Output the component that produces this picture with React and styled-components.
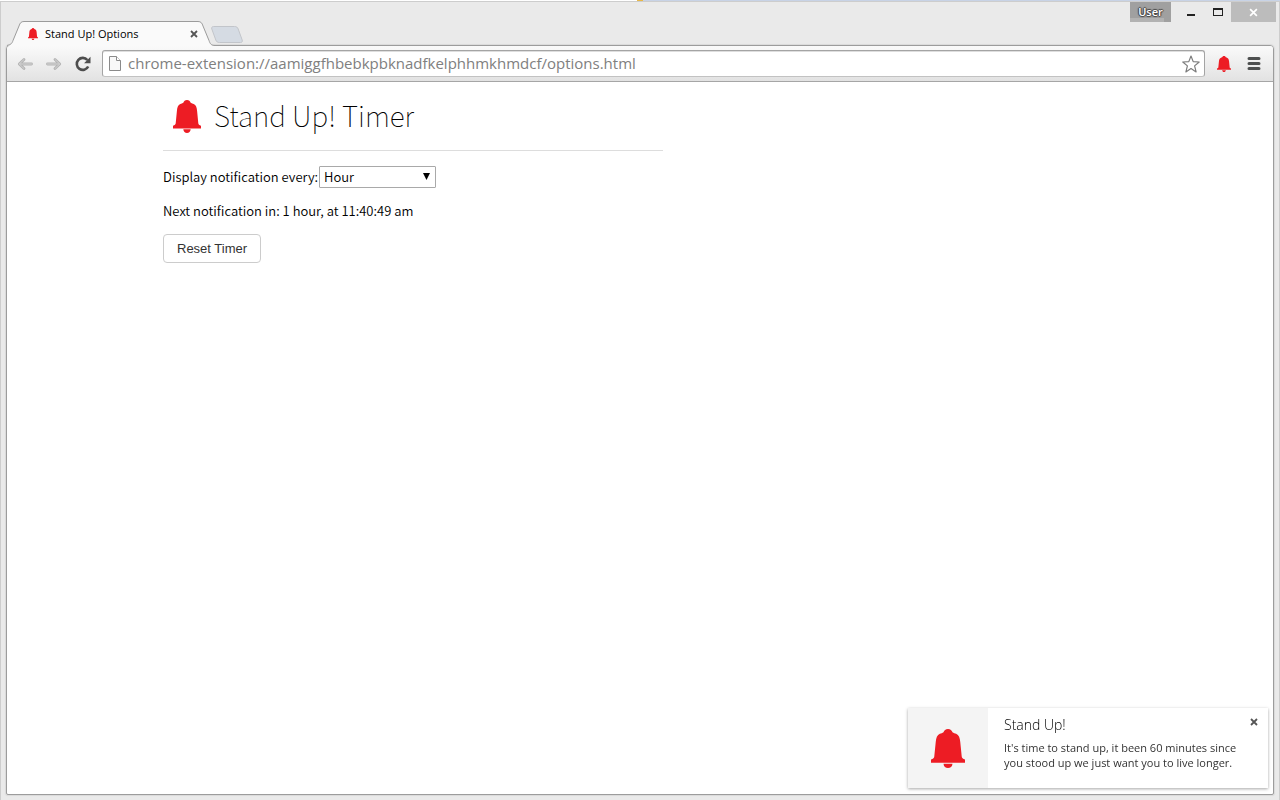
import React, { useState } from 'react';
import styled, { createGlobalStyle } from 'styled-components';

const GlobalStyle = createGlobalStyle`
  *, *::before, *::after { box-sizing: border-box; }
  body { margin: 0; background: #eaeaea; }
  h1, h2, p { margin: 0; font-weight: inherit; }
  button, input, select { font: inherit; color: inherit; margin: 0; padding: 0; border: 0; background: none; border-radius: 0; outline: 0; }
  svg { display: block; flex: none; }
`;

const chromeFont = '"Open Sans", "Noto Sans", sans-serif';
const pageFont = '"Noto Sans CJK SC", "Noto Sans", sans-serif';

const Window = styled.div`
  display: flex;
  flex-direction: column;
  min-height: 100vh;
  background: #eaeaea;
  border-left: 1px solid #cdcdcd;
  border-right: 1px solid #cdcdcd;
  font-family: ${chromeFont};
`;

const DesktopEdge = styled.div`
  display: flex;
  height: 2px;
  margin: 0 -1px;
  border-bottom: 1px solid #cdcdcd;
`;

const EdgeSegment = styled.span`
  flex: ${({ $grow }) => ($grow ? '1 1 0' : '0 0 6px')};
  background: ${({ $color }) => $color};
`;

const TitleBar = styled.header`
  display: flex;
  align-items: flex-end;
  height: 44px;
  margin-bottom: -1px;
  padding: 0 3px 0 6px;
`;

const Tab = styled.div`
  position: relative;
  z-index: 1;
  display: flex;
  align-items: center;
  width: 208px;
  height: 25px;
  margin-right: -4px;
  padding: 0 16px 0 21px;
  font-size: 11px;
  line-height: 16px;
  color: #000;
`;

const TabShape = styled.svg`
  position: absolute;
  inset: 0;
  z-index: -1;
`;

const TabTitle = styled.span`
  flex: 1;
  margin-left: 7px;
  white-space: nowrap;
`;

const IconButton = styled.button`
  display: flex;
  align-items: center;
  justify-content: center;
  flex: none;
  width: ${({ $width }) => $width || 16}px;
  height: ${({ $height }) => $height || 16}px;
  cursor: pointer;
`;

const NewTab = styled(IconButton)`
  margin-bottom: 3px;
`;

const WindowControls = styled.div`
  display: flex;
  align-self: flex-start;
  align-items: center;
  height: 20px;
  margin-left: auto;
`;

const UserButton = styled.button`
  width: 41px;
  height: 20px;
  margin-right: 6px;
  background: linear-gradient(90deg, #a0a0a0, #a0a0a0) top / 100% 16px no-repeat, linear-gradient(90deg, #b2b2b2 34px, #a0a0a0 34px);
  color: #fff;
  font-size: 11px;
  font-weight: 600;
  line-height: 20px;
  text-shadow: 1px 0 1px #444, -1px 0 1px #444, 0 1px 1px #444, 0 -1px 1px #444;
`;

const CloseWindow = styled(IconButton)`
  background: #bcbcbc;
`;

const Browser = styled.div`
  display: flex;
  flex-direction: column;
  flex: 1;
  margin: 0 5px 5px;
  border: 1px solid #9c9c9c;
  border-radius: 4px 4px 2px 2px;
  background: #fff;
  box-shadow: 0 0 1px 1px #dadada;
`;

const Toolbar = styled.nav`
  display: flex;
  align-items: center;
  height: 36px;
  padding: 0 1px 0 7px;
  border-bottom: 1px solid #a6a6a6;
  border-radius: 3px 3px 0 0;
  background: linear-gradient(#fafafa, #e2e2e2);
`;

const AddressBar = styled.div`
  display: flex;
  align-items: center;
  flex: 1;
  height: 27px;
  margin: 0 7px 0 8px;
  padding: 0 4px 0 6px;
  border: 1px solid #a4a4a4;
  border-bottom-color: #c2c2c2;
  border-radius: 3px;
  background: #fff;
  box-shadow: inset 0 1px #dedede;
`;

const AddressInput = styled.input`
  flex: 1;
  min-width: 0;
  height: 25px;
  margin-left: 7px;
  padding-bottom: 2px;
  font-size: 15px;
  line-height: 22px;
  color: #808080;
`;

const Content = styled.main`
  width: 500px;
  max-width: 100%;
  margin-left: 156px;
  font-family: ${pageFont};
  font-size: 13px;
  font-weight: 350;
  line-height: 20px;
  color: #000;
`;

const PageHeader = styled.header`
  display: flex;
  align-items: center;
  gap: 13px;
  height: 69px;
  padding-left: 10px;
  border-bottom: 1px solid #ddd;
`;

const PageTitle = styled.h1`
  padding-bottom: 2px;
  font-size: 28px;
  font-weight: 100;
  line-height: 40px;
`;

const Field = styled.div`
  display: flex;
  align-items: center;
  gap: 1px;
  height: 22px;
  margin-top: 15px;
`;

const SelectBox = styled.div`
  position: relative;
  width: 117px;
`;

const Select = styled.select`
  appearance: none;
  width: 100%;
  height: 22px;
  padding: 0 4px;
  border: 1px solid #a9a9a9;
  border-radius: 1px;
  background: #fff;
  line-height: 20px;
`;

const SelectArrow = styled.svg`
  position: absolute;
  top: 7px;
  right: 6px;
  pointer-events: none;
`;

const Status = styled.p`
  margin-top: 13px;
`;

const ResetButton = styled.button`
  height: 29px;
  margin-top: 13px;
  padding: 0 13px;
  border: 1px solid #ccc;
  border-radius: 4px;
  background: #fff;
  font-family: "Liberation Sans", sans-serif;
  font-size: 13px;
  color: #333;
`;

const Notification = styled.aside`
  position: fixed;
  right: 12px;
  bottom: 12px;
  display: flex;
  width: 360px;
  height: 80px;
  background: #fff;
  box-shadow: 0 1px 3px rgba(0, 0, 0, 0.35);
  font-family: ${chromeFont};
  color: #333;
`;

const NotificationIcon = styled.div`
  display: flex;
  align-items: center;
  justify-content: center;
  flex: none;
  width: 80px;
  background: #f4f4f4;
`;

const NotificationText = styled.div`
  flex: 1;
  padding: 8px 0 0 16px;
  white-space: nowrap;
`;

const NotificationTitle = styled.h2`
  font-size: 14px;
  font-weight: 300;
  line-height: 18px;
  color: #000;
`;

const NotificationMessage = styled.p`
  margin-top: 6px;
  font-size: 11px;
  line-height: 15px;
`;

const NotificationClose = styled(IconButton)`
  position: absolute;
  top: 6px;
  right: 6px;
`;

function Bell({ width, height }) {
  return (
    <svg width={width} height={height} viewBox="0 0 28 33" preserveAspectRatio="none" aria-hidden="true">
      <path
        fill="#ed1c24"
        d="M14 0c2 0 3.200 1.200 3.700 2.800 1 .7 2 .9 3 1.300 2.300 1 3.100 3.600 3.400 6.900l1.200 12.200c.1 1.200.9 1.900 2.700 2.600V28.500H0v-2.700c1.800-.7 2.600-1.400 2.700-2.600L3.900 11c.3-3.300 1.100-5.900 3.400-6.900 1-.4 2-.6 3-1.300C10.800 1.200 12 0 14 0zM10.300 29.300h7.400c-.2 2.400-1.700 3.700-3.700 3.700s-3.500-1.300-3.700-3.700z"
      />
    </svg>
  );
}

function Arrow({ flip }) {
  return (
    <svg width="16" height="14" viewBox="0 0 16 14" aria-hidden="true">
      <g transform={flip ? 'translate(16 0) scale(-1 1)' : undefined} fill="none" strokeLinecap="round" strokeLinejoin="round">
        <path d="M7 2.500L2.300 7L7 11.500M2.500 7H14.500" stroke="#b4b4b4" strokeWidth="2.800" />
        <path d="M7 2.500L2.300 7L7 11.500M2.500 7H14.500" stroke="#d4d4d4" />
      </g>
    </svg>
  );
}

function Cross({ size, color, width = 2 }) {
  return (
    <svg width={size} height={size} viewBox="0 0 8 8" aria-hidden="true">
      <path d="M1 1l6 6M7 1L1 7" fill="none" stroke={color} strokeWidth={width} />
    </svg>
  );
}

export default function App() {
  const [open, setOpen] = useState(true);

  return (
    <>
      <GlobalStyle />
      <Window>
        <DesktopEdge>
          <EdgeSegment $grow $color="#fff" />
          <EdgeSegment $color="#e8b84a" />
          <EdgeSegment $grow $color="#c8d3e6" />
        </DesktopEdge>
        <TitleBar>
          <Tab>
            <TabShape width="208" height="25" viewBox="0 0 208 25" aria-hidden="true">
              <path d="M0 25c4-1 5-2 6-5l6-15c1-3 2-4.500 5-4.500h174c3 0 4 1.500 5 4.500l6 15c1 3 2 4 6 5z" fill="#fafafa" />
              <path d="M0 24.500c4-1 5-2 6-5l6-14.500c1-3 2-4.500 5-4.500h174c3 0 4 1.500 5 4.500l6 14.500c1 3 2 5 6 5" fill="none" stroke="#9c9c9c" />
            </TabShape>
            <Bell width={10} height={12} />
            <TabTitle>Stand Up! Options</TabTitle>
            <IconButton type="button" aria-label="Close tab" $width={10}>
              <Cross size={8} color="#555" width={1.8} />
            </IconButton>
          </Tab>
          <NewTab type="button" aria-label="New tab" $width={32} $height={17}>
            <svg width="32" height="17" viewBox="0 0 32 17" aria-hidden="true">
              <path d="M2.500.5h21c2 0 3 .7 3.700 2.500l4 11c.4 1.500 0 2.500-1.700 2.500h-21c-2 0-3-.7-3.700-2.500l-4-11C.4 1.500 1 .5 2.500.5z" fill="#d5dbe3" stroke="#c2c5ca" />
            </svg>
          </NewTab>
          <WindowControls>
            <UserButton type="button">User</UserButton>
            <IconButton type="button" aria-label="Minimize" $width={27} $height={20}>
              <svg width="10" height="10" viewBox="0 0 10 10" aria-hidden="true">
                <path d="M1 7h8v2H1z" fill="#222" />
              </svg>
            </IconButton>
            <IconButton type="button" aria-label="Maximize" $width={27} $height={20}>
              <svg width="10" height="8" viewBox="0 0 10 8" aria-hidden="true">
                <path d="M0 0h10v8H0zM1 2v5h8V2z" fill="#222" fillRule="evenodd" />
              </svg>
            </IconButton>
            <CloseWindow type="button" aria-label="Close" $width={45} $height={20}>
              <Cross size={9} color="#fff" width={1.5} />
            </CloseWindow>
          </WindowControls>
        </TitleBar>
        <Browser>
          <Toolbar>
            <IconButton type="button" aria-label="Back" $width={22} $height={28}>
              <Arrow />
            </IconButton>
            <IconButton type="button" aria-label="Forward" $width={36} $height={28}>
              <Arrow flip />
            </IconButton>
            <IconButton type="button" aria-label="Reload" $width={22} $height={28}>
              <svg width="16" height="16" viewBox="0 0 16 16" aria-hidden="true">
                <path d="M13.200 10.500A6 6 0 1 1 12.400 4" fill="none" stroke="#4d4d4d" strokeWidth="2.600" />
                <path d="M15.500 .8v6.400H9.100z" fill="#4d4d4d" />
              </svg>
            </IconButton>
            <AddressBar>
              <svg width="12" height="15" viewBox="0 0 12 15" aria-hidden="true">
                <path d="M.5.5h7l4 4v10H.5z" fill="#f8f8f8" stroke="#8a8a8a" />
                <path d="M7.500.5v4h4" fill="#fff" stroke="#8a8a8a" />
              </svg>
              <AddressInput aria-label="Address" defaultValue="chrome-extension://aamiggfhbebkpbknadfkelphhmkhmdcf/options.html" />
              <IconButton type="button" aria-label="Bookmark this page" $width={18} $height={20}>
                <svg width="18" height="18" viewBox="0 0 18 18" aria-hidden="true">
                  <path d="M9 1l2.200 5.600 6 .4-4.600 3.900 1.500 6L9 13.600l-5.100 3.300 1.500-6L.8 7l6-.4z" fill="#fff" stroke="#7d7d7d" strokeWidth="1.200" strokeLinejoin="round" />
                </svg>
              </IconButton>
            </AddressBar>
            <IconButton type="button" aria-label="Stand Up! Timer" $width={24} $height={28}>
              <Bell width={14} height={16} />
            </IconButton>
            <IconButton type="button" aria-label="Menu" $width={36} $height={28}>
              <svg width="14" height="13" viewBox="0 0 14 13" aria-hidden="true">
                <path d="M2 1.500h10M2 6.500h10M2 11.500h10" stroke="#4d4f4f" strokeWidth="3" strokeLinecap="round" />
              </svg>
            </IconButton>
          </Toolbar>
          <Content>
            <PageHeader>
              <Bell width={28} height={33} />
              <PageTitle>Stand Up! Timer</PageTitle>
            </PageHeader>
            <Field>
              <label htmlFor="interval">Display notification every:</label>
              <SelectBox>
                <Select id="interval" defaultValue="hour">
                  <option value="hour">Hour</option>
                </Select>
                <SelectArrow width="7" height="7" viewBox="0 0 7 7" aria-hidden="true">
                  <path d="M0 0h7L3.500 7z" fill="#000" />
                </SelectArrow>
              </SelectBox>
            </Field>
            <Status>Next notification in: 1 hour, at 11:40:49 am</Status>
            <ResetButton type="button">Reset Timer</ResetButton>
          </Content>
        </Browser>
      </Window>
      {open && (
        <Notification>
          <NotificationIcon>
            <Bell width={34} height={39} />
          </NotificationIcon>
          <NotificationText>
            <NotificationTitle>Stand Up!</NotificationTitle>
            <NotificationMessage>
              It's time to stand up, it been 60 minutes since
              <br />
              you stood up we just want you to live longer.
            </NotificationMessage>
          </NotificationText>
          <NotificationClose type="button" aria-label="Dismiss" onClick={() => setOpen(false)}>
            <Cross size={8} color="#555" width={1.8} />
          </NotificationClose>
        </Notification>
      )}
    </>
  );
}
